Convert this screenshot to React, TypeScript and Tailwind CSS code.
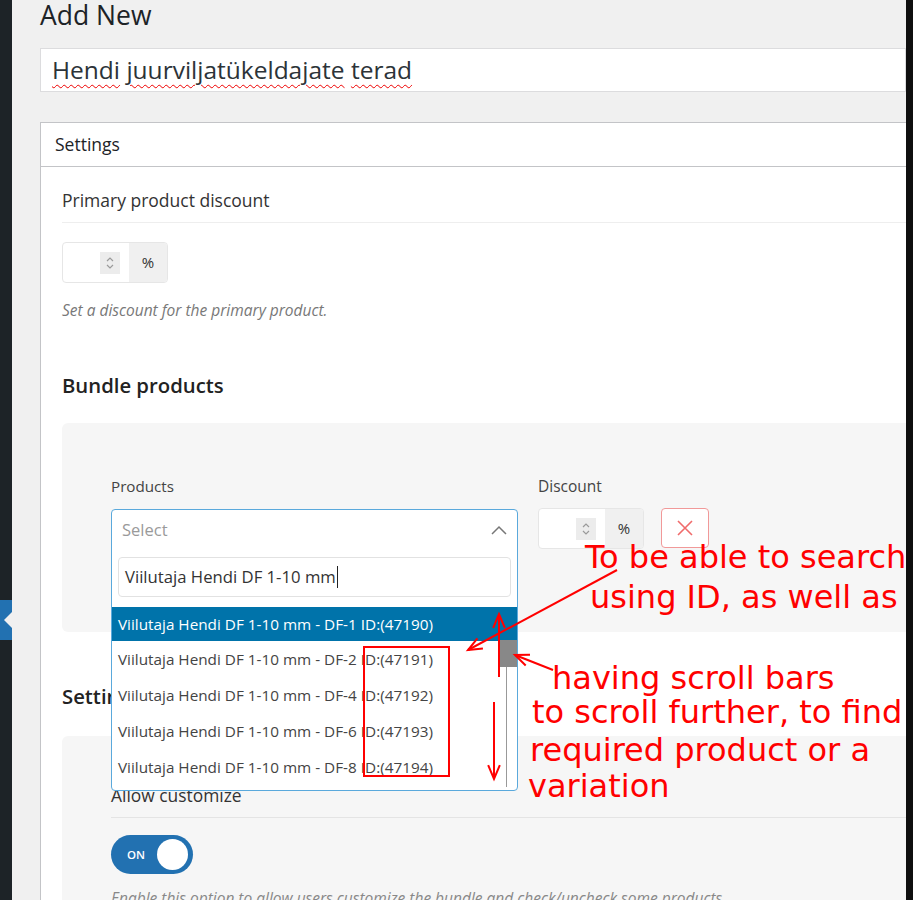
import React from 'react';

const options = [
  { label: 'Viilutaja Hendi DF 1-10 mm - DF-1', id: '47190' },
  { label: 'Viilutaja Hendi DF 1-10 mm - DF-2', id: '47191' },
  { label: 'Viilutaja Hendi DF 1-10 mm - DF-4', id: '47192' },
  { label: 'Viilutaja Hendi DF 1-10 mm - DF-6', id: '47193' },
  { label: 'Viilutaja Hendi DF 1-10 mm - DF-8', id: '47194' },
];

const Spinner: React.FC = () => (
  <span className="flex h-[22px] w-[20px] flex-col items-center justify-center bg-[#ececec]">
    <svg width="10" height="16" viewBox="0 0 10 16" fill="none" stroke="#9a9a9a" strokeWidth="1.2">
      <path d="M2 6 L5 3 L8 6" />
      <path d="M2 10 L5 13 L8 10" />
    </svg>
  </span>
);

const PercentInput: React.FC = () => (
  <div className="flex h-[41px] w-[106px] overflow-hidden rounded-[4px] border border-[#e6e6e6] bg-white">
    <div className="flex flex-1 items-center justify-end pr-[9px]">
      <Spinner />
    </div>
    <div className="flex w-[38px] items-center justify-center bg-[#f0f0f0] text-[15px] text-[#333]">%</div>
  </div>
);

const Arrow: React.FC<{ x1: number; y1: number; x2: number; y2: number }> = ({ x1, y1, x2, y2 }) => {
  const a = Math.atan2(y1 - y2, x1 - x2);
  const l = 15;
  const s = 0.4;
  const p1 = `${x2 + l * Math.cos(a + s)},${y2 + l * Math.sin(a + s)}`;
  const p2 = `${x2 + l * Math.cos(a - s)},${y2 + l * Math.sin(a - s)}`;
  return (
    <g stroke="#ff0000" strokeWidth="2" fill="none">
      <line x1={x1} y1={y1} x2={x2} y2={y2} />
      <polyline points={`${p1} ${x2},${y2} ${p2}`} />
    </g>
  );
};

export default function App() {
  return (
    <div className="relative flex h-[900px] w-[913px] overflow-hidden font-['Open_Sans',sans-serif] text-[#1d2327]">
      {/* admin menu edge */}
      <aside className="flex w-[12px] shrink-0 flex-col bg-[#1d2327]">
        <div className="h-[600px]" />
        <div className="relative h-[40px] bg-[#2271b1]">
          <div className="absolute right-0 top-[12px] h-0 w-0 border-y-[8px] border-r-[8px] border-y-transparent border-r-[#f0f0f0]" />
        </div>
      </aside>

      <main className="min-w-0 flex-1 bg-[#f0f0f0] pl-[28px]">
        <h1 className="h-[30px] text-[26.5px] leading-[30px] font-normal">Add New</h1>

        <div className="mt-[18px] flex h-[44px] items-center border border-[#dcdcde] bg-white pl-[11px]">
          <span className="text-[24.5px] leading-[30px] text-[#2c3338]">
            <span className="underline decoration-wavy decoration-[#e00] decoration-1 underline-offset-[5px]">Hendi</span>{' '}
            <span className="underline decoration-wavy decoration-[#e00] decoration-1 underline-offset-[5px]">juurviljatükeldajate</span>{' '}
            <span className="underline decoration-wavy decoration-[#e00] decoration-1 underline-offset-[5px]">terad</span>
          </span>
        </div>

        <section className="mt-[30px] border border-r-0 border-[#c3c4c7] bg-white">
          <div className="flex h-[44px] items-center border-b border-[#c3c4c7] pl-[14px] text-[17.5px] font-medium">Settings</div>

          <div className="pl-[21px] pt-[21px]">
            <div className="border-b border-[#eeeeee] pb-[10px] text-[17.5px] leading-[24px] font-medium text-[#333]">
              Primary product discount
            </div>
            <div className="mt-[19px]">
              <PercentInput />
            </div>
            <p className="mt-[17px] text-[15.5px] leading-[20px] italic text-[#787878]">Set a discount for the primary product.</p>

            <h2 className="mt-[51px] text-[20.3px] leading-[28px] font-semibold text-[#222]">Bundle products</h2>

            <div className="mt-[24px] h-[209px] rounded-l-[6px] bg-[#f6f6f6] pl-[49px] pt-[53px]">
              <div className="flex gap-[20px]">
                <div className="w-[407px]">
                  <div className="text-[15.2px] leading-[20px] font-medium text-[#444]">Products</div>
                  <div className="mt-[12px] h-[40px]" />
                </div>
                <div>
                  <div className="text-[15.5px] leading-[20px] font-medium text-[#444]">Discount</div>
                  <div className="mt-[12px] flex gap-[17px]">
                    <PercentInput />
                    <button className="flex h-[40px] w-[48px] items-center justify-center rounded-[4px] border border-[#f19999] bg-white">
                      <svg width="18" height="18" viewBox="0 0 18 18" stroke="#f06b6b" strokeWidth="1.6">
                        <path d="M2 2 L16 16 M16 2 L2 16" />
                      </svg>
                    </button>
                  </div>
                </div>
              </div>
            </div>

            <h2 className="mt-[50px] text-[20.3px] leading-[28px] font-semibold text-[#222]">Settings</h2>

            <div className="mt-[26px] h-[200px] rounded-l-[6px] bg-[#f6f6f6] pl-[49px] pt-[47px]">
              <div className="border-b border-[#e4e4e4] pb-[10px] text-[17.4px] leading-[24px] font-medium text-[#333]">
                Allow customize
              </div>
              <div className="mt-[17px] flex h-[39px] w-[82px] items-center justify-between rounded-full bg-[#2271b1] pl-[16px] pr-[5px]">
                <span className="text-[11.5px] font-semibold text-white">ON</span>
                <span className="h-[31px] w-[31px] rounded-full bg-white" />
              </div>
              <p className="mt-[14px] text-[15.5px] leading-[20px] italic text-[#888]">
                Enable this option to allow users customize the bundle and check/uncheck some products.
              </p>
            </div>
          </div>
        </section>
      </main>
      <div className="w-[7px] shrink-0 bg-[#0f0f0f]" />

      {/* open product dropdown */}
      <div className="absolute left-[111px] top-[509px] h-[282px] w-[407px] overflow-hidden rounded-[4px] border border-[#5aa9dc] bg-white">
        <div className="flex h-[40px] items-center justify-between pl-[10px] pr-[10px]">
          <span className="text-[16.5px] text-[#9a9a9a]">Select</span>
          <svg width="16" height="10" viewBox="0 0 16 10" fill="none" stroke="#777" strokeWidth="1.5">
            <path d="M1 9 L8 2 L15 9" />
          </svg>
        </div>
        <div className="mx-[6px] mt-[7px] flex h-[40px] items-center rounded-[4px] border border-[#e2e2e2] pl-[6px]">
          <span className="text-[16.7px] text-[#333]">Viilutaja Hendi DF 1-10 mm</span>
          <span className="ml-px h-[22px] w-px bg-[#222]" />
        </div>
        <ul className="mt-[10px]">
          {options.map((o, i) => (
            <li
              key={o.id}
              className={
                i === 0
                  ? 'flex h-[34px] items-center whitespace-nowrap bg-[#0073aa] pl-[6px] text-[15.3px] text-white'
                  : 'flex h-[36px] items-center whitespace-nowrap pl-[6px] text-[15.3px] text-[#444]'
              }
            >
              {o.label} ID:({o.id})
            </li>
          ))}
        </ul>
        <div className="absolute right-[10px] top-[131px] h-[146px] w-px bg-[#999]" />
        <div className="absolute right-0 top-[130px] h-[27px] w-[17px] bg-[#888]" />
      </div>

      {/* annotations */}
      <svg className="pointer-events-none absolute left-0 top-0" width="913" height="900">
        <rect x="364" y="647" width="85" height="129" fill="none" stroke="#ff0000" strokeWidth="2" />
        <Arrow x1={617} y1={570} x2={468} y2={650} />
        <Arrow x1={499} y1={677} x2={499} y2={614} />
        <Arrow x1={494} y1={702} x2={494} y2={779} />
        <Arrow x1={553} y1={670} x2={515} y2={655} />
      </svg>
      <div className="pointer-events-none absolute left-0 top-0 font-['DejaVu_Sans',sans-serif] text-[32px] leading-[40px] text-[#ff0000]">
        <div className="absolute left-[585px] top-[537px] whitespace-nowrap">To be able to search</div>
        <div className="absolute left-[590px] top-[577px] whitespace-nowrap">using ID, as well as</div>
        <div className="absolute left-[552px] top-[658px] whitespace-nowrap">having scroll bars</div>
        <div className="absolute left-[532px] top-[692px] whitespace-nowrap">to scroll further, to find</div>
        <div className="absolute left-[530px] top-[730px] whitespace-nowrap">required product or a</div>
        <div className="absolute left-[528px] top-[766px] whitespace-nowrap">variation</div>
      </div>
    </div>
  );
}
